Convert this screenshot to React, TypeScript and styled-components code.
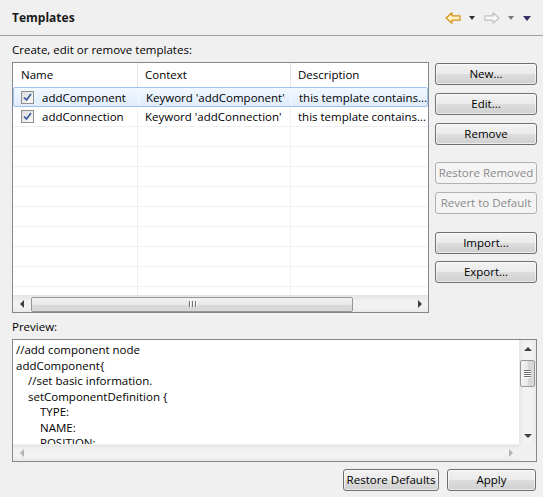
import styled, { createGlobalStyle, css } from "styled-components";

const GlobalStyle = createGlobalStyle`
    html, body {
        margin: 0;
        padding: 0;
        background: #f0f0f0;
    }
    * {
        box-sizing: border-box;
    }
`;

const FONT = `"Open Sans", "Liberation Sans", sans-serif`;

const Page = styled.div`
    width: 543px;
    height: 497px;
    background: #f0f0f0;
    font-family: ${FONT};
    font-size: 11.5px;
    color: #000;
    overflow: hidden;
`;

const Header = styled.div`
    height: 36px;
    display: flex;
    align-items: center;
    justify-content: space-between;
    padding: 0 12px 0 12px;
    border-bottom: 1px solid #a0a0a0;
`;

const Title = styled.h1`
    margin: 0;
    font-size: 12px;
    font-weight: 700;
    color: #1a1a1a;
    margin-top: -1px;
`;

const Toolbar = styled.div`
    display: flex;
    align-items: center;
    gap: 9px;
    margin-top: 1px;
`;

const ToolGroup = styled.div`
    display: flex;
    align-items: center;
    gap: 8px;
`;

const DropTriangle = styled.span<{ $color: string; $size?: number }>`
    width: 0;
    height: 0;
    border-left: ${(p) => (p.$size ?? 7) / 2}px solid transparent;
    border-right: ${(p) => (p.$size ?? 7) / 2}px solid transparent;
    border-top: ${(p) => Math.ceil((p.$size ?? 7) / 2)}px solid ${(p) => p.$color};
`;

const Body = styled.div`
    padding: 0 6px 0 12px;
`;

const Label = styled.div<{ $top: number }>`
    line-height: 16px;
    margin-top: ${(p) => p.$top}px;
    margin-bottom: 4px;
`;

const MainRow = styled.div`
    display: flex;
    gap: 6px;
`;

const TableBox = styled.div`
    width: 417px;
    height: 251px;
    border: 1px solid #828790;
    background: #fff;
    display: flex;
    flex-direction: column;
`;

const TableScroll = styled.div`
    flex: 1;
    overflow: hidden;
`;

const COLS = "125px 153px 160px";

const HeaderRow = styled.div`
    display: grid;
    grid-template-columns: ${COLS};
    height: 24px;
`;

const HeaderCell = styled.div<{ $pad: number }>`
    display: flex;
    align-items: center;
    padding-left: ${(p) => p.$pad}px;
    border-right: 1px solid #e5e5e5;
    white-space: nowrap;
    overflow: hidden;
    padding-bottom: 2px;
`;

const Row = styled.div<{ $selected?: boolean }>`
    display: grid;
    grid-template-columns: ${COLS};
    height: 20px;
    border-bottom: 1px solid #f0f0f0;
    ${(p) =>
        p.$selected &&
        css`
            border: 1px solid #9fc3ea;
            border-radius: 2px;
            background: linear-gradient(#f2f8fe, #dfecfb);
        `}
`;

const Cell = styled.div<{ $pad: number; $selected?: boolean }>`
    display: flex;
    align-items: center;
    gap: 8px;
    padding-left: ${(p) => p.$pad}px;
    border-right: 1px solid ${(p) => (p.$selected ? "#f4f8fd" : "#edf1f6")};
    white-space: nowrap;
    overflow: hidden;
`;

const CheckBox = styled.span`
    width: 13px;
    height: 13px;
    flex: none;
    border: 1px solid #8e8f8f;
    background: linear-gradient(135deg, #dcdcdc, #fbfbfb);
    display: flex;
    align-items: center;
    justify-content: center;
    padding: 1px;
`;

const HScroll = styled.div<{ $disabled?: boolean }>`
    height: 17px;
    flex: none;
    display: flex;
    align-items: center;
    background: linear-gradient(#e6e6e6, #f2f2f2 30%, #f2f2f2 70%, #e9e9e9);
    border-top: 1px solid ${(p) => (p.$disabled ? "#f0f0f0" : "#e4e4e4")};
`;

const ScrollBtn = styled.div`
    width: 17px;
    height: 100%;
    flex: none;
    display: flex;
    align-items: center;
    justify-content: center;
`;

const Arrow = styled.span<{ $dir: "left" | "right" | "up" | "down"; $color: string }>`
    width: 0;
    height: 0;
    ${(p) =>
        p.$dir === "left"
            ? css`
                  border-top: 4px solid transparent;
                  border-bottom: 4px solid transparent;
                  border-right: 4px solid ${p.$color};
              `
            : p.$dir === "right"
            ? css`
                  border-top: 4px solid transparent;
                  border-bottom: 4px solid transparent;
                  border-left: 4px solid ${p.$color};
              `
            : p.$dir === "up"
            ? css`
                  border-left: 4px solid transparent;
                  border-right: 4px solid transparent;
                  border-bottom: 4px solid ${p.$color};
              `
            : css`
                  border-left: 4px solid transparent;
                  border-right: 4px solid transparent;
                  border-top: 4px solid ${p.$color};
              `}
`;

const ScrollTrack = styled.div`
    flex: 1;
    height: 100%;
    display: flex;
    align-items: center;
`;

const HThumb = styled.div`
    width: 322px;
    height: 15px;
    margin-left: 1px;
    border: 1px solid #979797;
    border-radius: 2px;
    background: linear-gradient(#f4f4f4, #e7e7e7 50%, #d6d6d6 51%, #dadada);
    display: flex;
    align-items: center;
    justify-content: center;
    gap: 2px;
`;

const GripV = styled.span`
    width: 1px;
    height: 6px;
    background: #6f6f6f;
    box-shadow: 1px 0 0 #fff;
`;

const ButtonColumn = styled.div`
    display: flex;
    flex-direction: column;
    width: 102px;
    padding-top: 1px;
`;

const Button = styled.button<{ $gap?: number; $width?: number }>`
    height: 22px;
    width: ${(p) => (p.$width ? `${p.$width}px` : "100%")};
    margin-top: ${(p) => p.$gap ?? 0}px;
    border: 1px solid #707070;
    border-radius: 3px;
    background: linear-gradient(#f2f2f2 0%, #ebebeb 48%, #dddddd 52%, #cfcfcf 100%);
    font-family: ${FONT};
    font-size: 11.5px;
    color: #000;
    padding: 0 0 1px 0;
    box-shadow: inset 0 0 0 1px rgba(255, 255, 255, 0.6);
    &:disabled {
        border-color: #adb2b5;
        background: #f4f4f4;
        color: #8a8a8a;
        box-shadow: none;
    }
`;

const PreviewBox = styled.div`
    width: 525px;
    height: 123px;
    border: 1px solid #828790;
    background: #fff;
    display: grid;
    grid-template-columns: 1fr 17px;
    grid-template-rows: 1fr 17px;
`;

const Code = styled.div`
    overflow: hidden;
    padding: 2px 0 0 3px;
    line-height: 15.5px;
`;

const CodeLine = styled.div<{ $indent: number }>`
    padding-left: ${(p) => p.$indent * 12}px;
    white-space: pre;
`;

const VScroll = styled.div`
    display: flex;
    flex-direction: column;
    align-items: center;
    background: linear-gradient(90deg, #e6e6e6, #f2f2f2 30%, #f2f2f2 70%, #e9e9e9);
`;

const VBtn = styled.div`
    height: 17px;
    width: 100%;
    flex: none;
    display: flex;
    align-items: center;
    justify-content: center;
`;

const VTrack = styled.div`
    flex: 1;
    width: 100%;
    display: flex;
    justify-content: center;
`;

const VThumb = styled.div`
    width: 15px;
    height: 27px;
    margin-top: 3px;
    border: 1px solid #979797;
    border-radius: 2px;
    background: linear-gradient(90deg, #f4f4f4, #e7e7e7 50%, #d6d6d6 51%, #dadada);
    display: flex;
    flex-direction: column;
    align-items: center;
    justify-content: center;
    gap: 1px;
`;

const GripH = styled.span`
    width: 7px;
    height: 1px;
    background: #6f6f6f;
    box-shadow: 0 1px 0 #fff;
`;

const Corner = styled.div`
    background: #f0f0f0;
`;

const Footer = styled.div`
    display: flex;
    justify-content: flex-end;
    gap: 8px;
    margin-top: 7px;
    padding-right: 1px;
`;

function CheckMark() {
    return (
        <svg width="9" height="9" viewBox="0 0 9 9">
            <path d="M1 4.5 L3.5 7 L8 1" fill="none" stroke="#3d5a9e" strokeWidth="1.7" />
        </svg>
    );
}

function NavArrow({ dir, stroke, fill }: { dir: "left" | "right"; stroke: string; fill: string }) {
    const d =
        dir === "left"
            ? "M1 6 L7 0.8 L7 3.8 L15 3.8 L15 8.2 L7 8.2 L7 11.2 Z"
            : "M15 6 L9 0.8 L9 3.8 L1 3.8 L1 8.2 L9 8.2 L9 11.2 Z";
    return (
        <svg width="16" height="12" viewBox="0 0 16 12">
            <path d={d} fill={fill} stroke={stroke} strokeWidth="1.2" strokeLinejoin="round" />
        </svg>
    );
}

const templates = [
    { name: "addComponent", context: "Keyword 'addComponent'", description: "this template contains..." },
    { name: "addConnection", context: "Keyword 'addConnection'", description: "this template contains..." },
];

const code: [number, string][] = [
    [0, "//add component node"],
    [0, "addComponent{"],
    [1, "//set basic information."],
    [1, "setComponentDefinition {"],
    [2, "TYPE:"],
    [2, "NAME:"],
    [2, "POSITION:"],
];

export default function App() {
    const emptyRows = Array.from({ length: 9 });

    return (
        <Page>
            <GlobalStyle />
            <Header>
                <Title>Templates</Title>
                <Toolbar>
                    <ToolGroup>
                        <NavArrow dir="left" stroke="#d48f17" fill="#fff1c4" />
                        <DropTriangle $color="#2e2e2e" />
                    </ToolGroup>
                    <ToolGroup>
                        <NavArrow dir="right" stroke="#c2c2c2" fill="#f7f7f7" />
                        <DropTriangle $color="#7a7a7a" />
                    </ToolGroup>
                    <DropTriangle $color="#3b2d66" $size={9} />
                </Toolbar>
            </Header>
            <Body>
                <Label $top={6}>Create, edit or remove templates:</Label>
                <MainRow>
                    <TableBox>
                        <TableScroll>
                            <HeaderRow>
                                <HeaderCell $pad={8}>Name</HeaderCell>
                                <HeaderCell $pad={7}>Context</HeaderCell>
                                <HeaderCell $pad={7}>Description</HeaderCell>
                            </HeaderRow>
                            {templates.map((t, i) => (
                                <Row key={t.name} $selected={i === 0}>
                                    <Cell $pad={i === 0 ? 7 : 8} $selected={i === 0}>
                                        <CheckBox>
                                            <CheckMark />
                                        </CheckBox>
                                        {t.name}
                                    </Cell>
                                    <Cell $pad={7} $selected={i === 0}>{t.context}</Cell>
                                    <Cell $pad={7} $selected={i === 0}>{t.description}</Cell>
                                </Row>
                            ))}
                            {emptyRows.map((_, i) => (
                                <Row key={i}>
                                    <Cell $pad={8} />
                                    <Cell $pad={7} />
                                    <Cell $pad={7} />
                                </Row>
                            ))}
                        </TableScroll>
                        <HScroll>
                            <ScrollBtn>
                                <Arrow $dir="left" $color="#3f3f3f" />
                            </ScrollBtn>
                            <ScrollTrack>
                                <HThumb>
                                    <GripV />
                                    <GripV />
                                    <GripV />
                                </HThumb>
                            </ScrollTrack>
                            <ScrollBtn>
                                <Arrow $dir="right" $color="#3f3f3f" />
                            </ScrollBtn>
                        </HScroll>
                    </TableBox>
                    <ButtonColumn>
                        <Button>New...</Button>
                        <Button $gap={8}>Edit...</Button>
                        <Button $gap={8}>Remove</Button>
                        <Button $gap={17} disabled>Restore Removed</Button>
                        <Button $gap={8} disabled>Revert to Default</Button>
                        <Button $gap={18}>Import...</Button>
                        <Button $gap={7}>Export...</Button>
                    </ButtonColumn>
                </MainRow>
                <Label $top={6}>Preview:</Label>
                <PreviewBox>
                    <Code>
                        {code.map(([indent, text], i) => (
                            <CodeLine key={i} $indent={indent}>
                                {text}
                            </CodeLine>
                        ))}
                    </Code>
                    <VScroll>
                        <VBtn>
                            <Arrow $dir="up" $color="#404040" />
                        </VBtn>
                        <VTrack>
                            <VThumb>
                                <GripH />
                                <GripH />
                                <GripH />
                                <GripH />
                            </VThumb>
                        </VTrack>
                        <VBtn>
                            <Arrow $dir="down" $color="#404040" />
                        </VBtn>
                    </VScroll>
                    <HScroll $disabled>
                        <ScrollBtn>
                            <Arrow $dir="left" $color="#b4b4b4" />
                        </ScrollBtn>
                        <ScrollTrack />
                        <ScrollBtn>
                            <Arrow $dir="right" $color="#b4b4b4" />
                        </ScrollBtn>
                    </HScroll>
                    <Corner />
                </PreviewBox>
                <Footer>
                    <Button $width={96}>Restore Defaults</Button>
                    <Button $width={89}>Apply</Button>
                </Footer>
            </Body>
        </Page>
    );
}
